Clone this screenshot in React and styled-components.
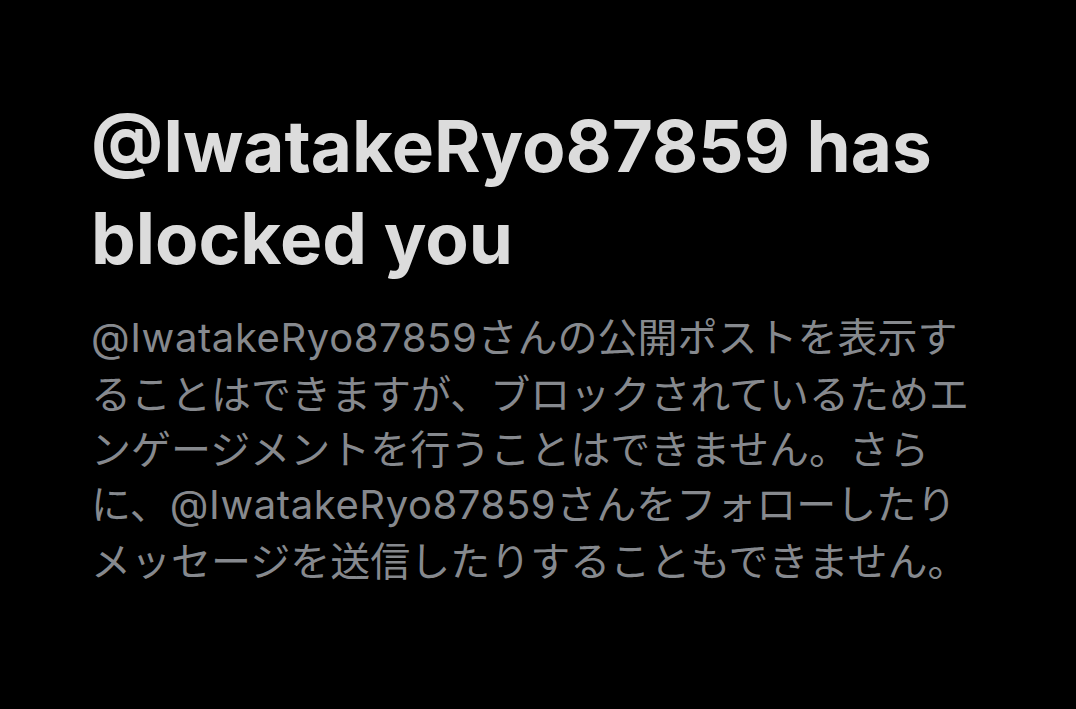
import React from "react";
import styled, { createGlobalStyle } from "styled-components";

const GlobalStyle = createGlobalStyle`
  html, body {
    margin: 0;
    padding: 0;
    background: #000000;
  }
`;

const Page = styled.div`
  width: 1076px;
  height: 709px;
  background: #000000;
  box-sizing: border-box;
  padding: 100px 0 0 91px;
  display: flex;
  flex-direction: column;
  gap: 24px;
`;

const Title = styled.h1`
  margin: 0;
  font-family: Inter, "Liberation Sans", Arial, sans-serif;
  font-weight: 700;
  font-size: 71px;
  line-height: 92px;
  color: #dcdcdc;
`;

const Message = styled.p`
  margin: 0;
  font-family: "Noto Sans CJK JP", "Noto Sans", sans-serif;
  font-size: 40px;
  line-height: 55px;
  color: #86898e;
  white-space: nowrap;
`;

const Handle = styled.span`
  font-family: Inter, "Liberation Sans", sans-serif;
  letter-spacing: ${(p) => p.$spacing || 0}px;
`;

const handle = "@IwatakeRyo87859";

export default function App() {
  return (
    <>
      <GlobalStyle />
      <Page>
        <Title>
          {handle} has
          <br />
          blocked you
        </Title>
        <Message>
          <Handle $spacing={0.6}>{handle}</Handle>さんの公開ポストを表示す
          <br />
          ることはできますが、ブロックされているためエ
          <br />
          ンゲージメントを行うことはできません。さら
          <br />
          に、<Handle $spacing={0.6}>{handle}</Handle>さんをフォローしたり
          <br />
          メッセージを送信したりすることもできません。
        </Message>
      </Page>
    </>
  );
}
